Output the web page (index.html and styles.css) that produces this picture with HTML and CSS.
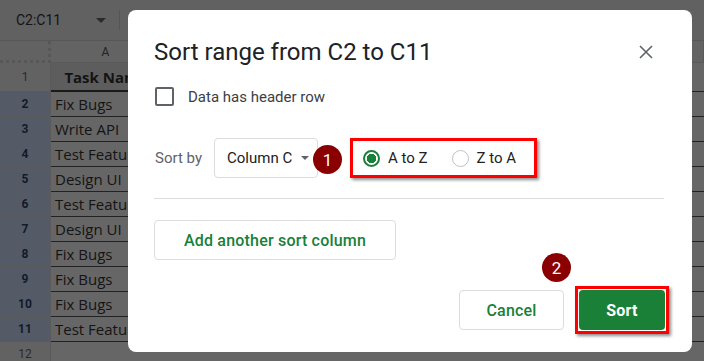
FILE: index.html
```html
<!DOCTYPE html>
<html lang="en">
  <head>
    <meta charset="UTF-8" />
    <meta name="viewport" content="width=device-width, initial-scale=1.0" />
    <title>Sort range</title>
    <link rel="stylesheet" href="styles.css">
  </head>
  <body>
    <div class="sheet">
      <header class="toolbar">
        <span class="namebox">C2:C11</span>
        <span class="caret"></span>
        <span class="sep"></span>
      </header>
      <section class="grid">
        <div class="corner"></div>
        <div class="colhead">A</div>
        <div class="colhead"></div>

        <div class="rowhead">1</div>
        <div class="cell title">Task Name</div>
        <div class="cell"></div>

        <div class="rowhead sel">2</div><div class="cell">Fix Bugs</div><div class="cell"></div>
        <div class="rowhead sel">3</div><div class="cell">Write API</div><div class="cell"></div>
        <div class="rowhead sel">4</div><div class="cell">Test Feature</div><div class="cell"></div>
        <div class="rowhead sel">5</div><div class="cell">Design UI</div><div class="cell"></div>
        <div class="rowhead sel">6</div><div class="cell">Test Feature</div><div class="cell"></div>
        <div class="rowhead sel">7</div><div class="cell">Design UI</div><div class="cell"></div>
        <div class="rowhead sel">8</div><div class="cell">Fix Bugs</div><div class="cell"></div>
        <div class="rowhead sel">9</div><div class="cell">Fix Bugs</div><div class="cell"></div>
        <div class="rowhead sel">10</div><div class="cell">Fix Bugs</div><div class="cell"></div>
        <div class="rowhead sel">11</div><div class="cell">Test Feature</div><div class="cell"></div>
        <div class="rowhead">12</div><div class="cell last"></div><div class="cell last"></div>
      </section>
    </div>

    <div class="dialog">
      <div class="dialog-head">
        <h1>Sort range from C2 to C11</h1>
        <svg class="close" width="14" height="14" viewBox="0 0 14 14">
          <path d="M1 1L13 13M13 1L1 13" stroke="#5f6368" stroke-width="1.6" fill="none" />
        </svg>
      </div>

      <label class="check">
        <span class="box"></span>
        <span>Data has header row</span>
      </label>

      <div class="sort-row">
        <span class="muted">Sort by</span>
        <div class="select">
          <span>Column C</span>
          <span class="caret dark"></span>
          <span class="badge one">1</span>
        </div>
        <div class="order">
          <span class="radio on"></span><span>A to Z</span>
          <span class="radio off"></span><span>Z to A</span>
        </div>
      </div>

      <hr class="divider" />

      <button class="btn add">Add another sort column</button>

      <div class="actions">
        <button class="btn">Cancel</button>
        <span class="mark">
          <button class="btn primary">Sort</button>
          <span class="badge two">2</span>
        </span>
      </div>
    </div>
  </body>
</html>
```

FILE: styles.css
```css
/* styles.css */
body {
  margin: 0;
  width: 704px;
  height: 361px;
  overflow: hidden;
  background-color: #646464;
  font-family: Roboto, "Liberation Sans", sans-serif;
}

/* background sheet, already dimmed */
.sheet {
  color: #141414;
}

.toolbar {
  display: flex;
  align-items: center;
  height: 40px;
  border-bottom: 1px solid #575757;
  background-color: #616161;
}

.namebox {
  margin-left: 16px;
  font-size: 14px;
  width: 80px;
}

.caret {
  width: 0;
  height: 0;
  border-left: 5px solid transparent;
  border-right: 5px solid transparent;
  border-top: 5px solid #2a2a2a;
}

.sep {
  width: 1px;
  height: 20px;
  margin-left: 13px;
  background-color: #555;
}

.grid {
  display: grid;
  grid-template-columns: 51px 110px 1fr;
  grid-template-rows: 22px 29px repeat(11, 25px);
}

.corner {
  background-color: #626262;
  border-right: 3px dotted #575757;
  border-bottom: 3px dotted #575757;
}

.colhead {
  background-color: #636363;
  border-bottom: 1px solid #5a5a5a;
  border-right: 1px solid #5a5a5a;
  display: flex;
  justify-content: center;
  align-items: center;
  font-size: 12px;
  color: #222;
}

.rowhead {
  display: flex;
  justify-content: center;
  align-items: center;
  font-size: 12px;
  color: #2a2a2a;
  background-color: #626262;
  border-bottom: 1px solid #5a5a5a;
  border-right: 1px solid #5a5a5a;
}

.rowhead.sel {
  background-color: #545b66;
  font-weight: bold;
  color: #121a2a;
}

.cell {
  display: flex;
  align-items: center;
  padding-left: 4px;
  font-family: "Open Sans", sans-serif;
  font-size: 15px;
  white-space: nowrap;
  overflow: hidden;
  background-color: #666;
  border-bottom: 1px solid #222;
}

.cell.title {
  justify-content: center;
  padding-left: 0;
  font-weight: bold;
  background-color: #5d5d5d;
  border-bottom: 2px solid #1a1a1a;
}

.cell.last {
  border-bottom: none;
}

/* dialog */
.dialog {
  position: absolute;
  left: 128px;
  top: 10px;
  width: 510px;
  height: 314px;
  padding: 28px 28px 0 26px;
  background-color: #fff;
  border-radius: 8px;
  color: #202124;
}

.dialog-head {
  display: flex;
  justify-content: space-between;
  align-items: center;
}

h1 {
  margin: 0;
  font-size: 24px;
  font-weight: 400;
  line-height: 28px;
}

.close {
  margin-right: 11px;
}

.check {
  display: flex;
  align-items: center;
  gap: 14px;
  margin-top: 21px;
  margin-left: 1px;
  font-size: 15px;
  color: #3c4043;
}

.box {
  width: 15px;
  height: 15px;
  border: 2px solid #5f6368;
  border-radius: 2px;
}

.sort-row {
  display: flex;
  align-items: center;
  margin-top: 32px;
  height: 40px;
}

.muted {
  font-size: 15px;
  color: #5f6368;
  margin-left: 1px;
  width: 59px;
}

.select {
  position: relative;
  display: flex;
  align-items: center;
  gap: 9px;
  box-sizing: border-box;
  width: 104px;
  height: 40px;
  padding-left: 12px;
  border: 1px solid #dadce0;
  border-radius: 4px;
  font-size: 15px;
}

.caret.dark {
  border-left-width: 4px;
  border-right-width: 4px;
  border-top: 4px solid #5f6368;
}

.badge {
  position: absolute;
  width: 29px;
  height: 29px;
  border-radius: 50%;
  background-color: #8a0000;
  color: #fff;
  font-size: 17px;
  display: flex;
  justify-content: center;
  align-items: center;
}

.badge.one {
  left: 98px;
  top: 6px;
}

.badge.two {
  left: -36px;
  top: -36px;
}

.order {
  display: flex;
  align-items: center;
  box-sizing: border-box;
  width: 187px;
  height: 40px;
  margin-left: 32px;
  padding-left: 10px;
  border: 3px solid #f00;
  box-shadow: 2px 2px 3px rgba(0, 0, 0, 0.45);
  font-size: 15px;
}

.radio {
  box-sizing: border-box;
  width: 17px;
  height: 17px;
  border-radius: 50%;
  margin-right: 8px;
}

.radio.on {
  border: 2px solid #188038;
  background: radial-gradient(circle, #188038 0 4.5px, #fff 5px);
}

.radio.off {
  margin-left: 24px;
  border: 1px solid #bdc1c6;
}

.divider {
  margin: 20px 0 0 0;
  border: none;
  border-top: 1px solid #dadce0;
}

.btn {
  height: 40px;
  padding: 0 24px;
  background-color: #fff;
  border: 1px solid #dadce0;
  border-radius: 4px;
  font-family: Roboto, sans-serif;
  font-size: 16px;
  font-weight: 500;
  letter-spacing: 0.2px;
  color: #188038;
}

.btn.add {
  margin: 21px 0 0 0;
  width: 242px;
}

.actions {
  display: flex;
  justify-content: flex-end;
  align-items: center;
  gap: 11px;
  margin-top: 26px;
}

.actions .btn {
  width: 105px;
}

.mark {
  position: relative;
  display: flex;
  padding: 1px;
  margin-right: -5px;
  border: 3px solid #f00;
  box-shadow: 2px 2px 3px rgba(0, 0, 0, 0.45);
}

.btn.primary {
  width: 86px;
  border: none;
  background-color: #1a8038;
  color: #fff;
  font-weight: bold;
}
```
